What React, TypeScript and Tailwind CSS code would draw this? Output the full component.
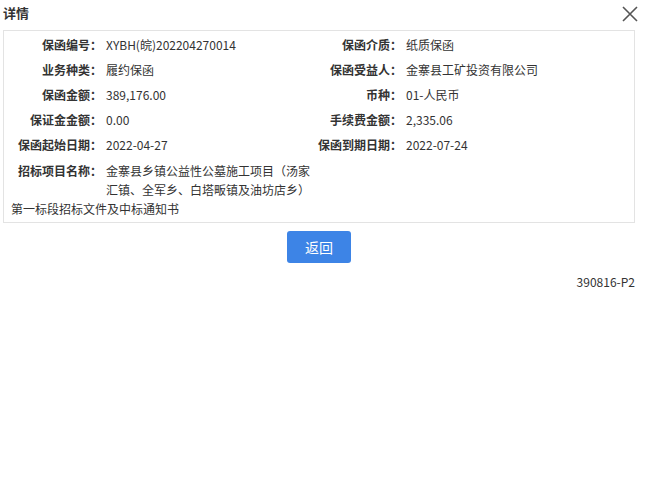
const font = { fontFamily: '"Noto Sans CJK SC", "Noto Sans", sans-serif' };

interface Row {
  label: string;
  value: string;
}

const rows: [Row, Row][] = [
  [
    { label: '保函编号：', value: 'XYBH(皖)202204270014' },
    { label: '保函介质：', value: '纸质保函' },
  ],
  [
    { label: '业务种类：', value: '履约保函' },
    { label: '保函受益人：', value: '金寨县工矿投资有限公司' },
  ],
  [
    { label: '保函金额：', value: '389,176.00' },
    { label: '币种：', value: '01-人民币' },
  ],
  [
    { label: '保证金金额：', value: '0.00' },
    { label: '手续费金额：', value: '2,335.06' },
  ],
  [
    { label: '保函起始日期：', value: '2022-04-27' },
    { label: '保函到期日期：', value: '2022-07-24' },
  ],
];

const Cell = ({ label, value }: Row) => (
  <>
    <div className="w-[98px] text-right font-bold text-[#333]">{label}</div>
    <div className="pl-[4px] text-[#333]">{value}</div>
  </>
);

export default function App() {
  return (
    <div className="w-[647px] h-[493px] bg-white text-[12px]" style={font}>
      <div className="flex items-center justify-between h-[26px] pl-[3px] pr-[9px]">
        <span className="text-[13px] font-bold text-[#333]">详情</span>
        <svg width="16" height="16" viewBox="0 0 16 16" className="mt-[1px]">
          <path d="M1 1 L15 15 M15 1 L1 15" stroke="#555" strokeWidth="1.6" fill="none" />
        </svg>
      </div>

      <div className="mx-[3px] mt-[4px] w-[632px] h-[193px] border border-[#e3e3e3] pt-[1px]">
        {rows.map(([a, b], i) => (
          <div key={i} className="grid grid-cols-[98px_202px_98px_1fr] h-[25px] leading-[25px]">
            <Cell {...a} />
            <Cell {...b} />
          </div>
        ))}
        <div className="pt-[4px] leading-[19px] text-[#333]">
          <div className="flex">
            <div className="w-[98px] text-right font-bold">招标项目名称：</div>
            <div className="w-[210px] pl-[4px]">金寨县乡镇公益性公墓施工项目（汤家汇镇、全军乡、白塔畈镇及油坊店乡）</div>
          </div>
          <div className="pl-[7px]">第一标段招标文件及中标通知书</div>
        </div>
      </div>

      <div className="mt-[8px]">
        <button className="block w-[64px] h-[32px] ml-[287px] rounded-[3px] bg-[#3d84e6] text-white text-[14px]">
          返回
        </button>
      </div>

      <div className="w-[635px] text-right text-[#333] mt-[10px] leading-[18px]">390816-P2</div>
    </div>
  );
}
